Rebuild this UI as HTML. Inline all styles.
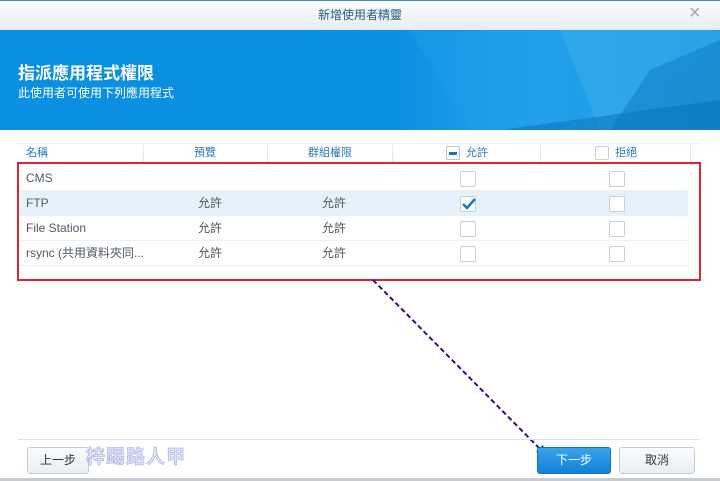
<!DOCTYPE html><html><head><meta charset="utf-8"><style>
body{margin:0;width:720px;height:481px;overflow:hidden;background:#fff;font-family:"Liberation Sans","Noto Sans CJK TC",sans-serif;position:relative}
.a{position:absolute;line-height:16px;white-space:nowrap}
.t{font-size:12px;color:#505a64}
.cb{position:absolute;width:14px;height:14px;border:1px solid #c8d0d8;border-radius:2px;background:#fff}
.h{font-size:11px;color:#2a7ab8;top:145px}
.btn{position:absolute;top:447px;height:25px;border:1px solid #c4ccd6;border-radius:3px;background:linear-gradient(#fafcfe,#e8eef4);font-size:12px;color:#333;text-align:center;line-height:25px}
</style></head><body>
<div class="a" style="left:0;top:0;width:720px;height:30px;background:linear-gradient(#fafcfd,#e6eef4);border-top:1px solid #4a8ab8;box-sizing:border-box"></div>
<div class="a" style="left:0;top:7px;width:720px;text-align:center;font-size:12px;color:#2a5a80">新增使用者精靈</div>
<div class="a" style="left:689px;top:5px;font-size:20px;color:#9aa8b4">×</div>
<div class="a" style="left:0;top:30px;width:720px;height:100px;background:linear-gradient(90deg,#0b8fe0 0%,#0b8fe0 55%,#2aa6ec 75%,#1a90d8 100%);overflow:hidden">
<svg width="720" height="100" style="position:absolute;left:0;top:0"><polygon points="410,0 720,0 720,20 560,100 470,100" fill="#1d9de8" opacity=".6"/><polygon points="560,0 720,0 720,100 600,100" fill="#4ab8f0" opacity=".35"/><polygon points="650,40 720,10 720,100 610,100" fill="#0a7cc8" opacity=".5"/><polygon points="500,100 720,70 720,100" fill="#0670b8" opacity=".5"/></svg></div>
<div class="a" style="left:18px;top:63px;font-size:17px;line-height:22px;font-weight:bold;color:#fff">指派應用程式權限</div>
<div class="a" style="left:18px;top:85px;font-size:12px;color:#fff">此使用者可使用下列應用程式</div>
<div class="a" style="left:17px;top:143px;width:682px;height:19px;border-top:1px solid #eef2f5"></div>
<div class="a" style="left:143px;top:145px;width:1px;height:17px;background:#e2e8ee"></div>
<div class="a" style="left:267px;top:145px;width:1px;height:17px;background:#e2e8ee"></div>
<div class="a" style="left:392px;top:145px;width:1px;height:17px;background:#e2e8ee"></div>
<div class="a" style="left:540px;top:145px;width:1px;height:17px;background:#e2e8ee"></div>
<div class="a" style="left:690px;top:145px;width:1px;height:17px;background:#e2e8ee"></div>
<div class="a h" style="left:26px">名稱</div><div class="a h" style="left:194px">預覽</div><div class="a h" style="left:308px">群組權限</div><div class="a h" style="left:466px">允許</div><div class="a h" style="left:615px">拒絕</div>
<div class="cb" style="left:446px;top:146px;width:12px;height:12px;border-color:#b8c8d8"><div style="position:absolute;left:2px;top:5px;width:8px;height:3px;background:#1a78c0"></div></div>
<div class="cb" style="left:595px;top:146px;width:12px;height:12px"></div>
<div class="a" style="left:18px;top:191px;width:670px;height:25px;background:#e6f2fb"></div>
<div class="a" style="left:18px;top:190px;width:670px;height:1px;background:#eef1f4"></div>
<div class="a" style="left:18px;top:240px;width:670px;height:1px;background:#eef1f4"></div>
<div class="a" style="left:18px;top:265px;width:670px;height:1px;background:#eef1f4"></div>
<div class="a t" style="left:26px;top:170px">CMS</div>
<div class="a t" style="left:26px;top:195px">FTP</div><div class="a t" style="left:198px;top:195px">允許</div><div class="a t" style="left:322px;top:195px">允許</div>
<div class="a t" style="left:26px;top:220px">File Station</div><div class="a t" style="left:198px;top:220px">允許</div><div class="a t" style="left:322px;top:220px">允許</div>
<div class="a t" style="left:26px;top:245px">rsync (共用資料夾同...</div><div class="a t" style="left:198px;top:245px">允許</div><div class="a t" style="left:322px;top:245px">允許</div>
<div class="cb" style="left:460px;top:171px"></div><div class="cb" style="left:609px;top:171px"></div>
<div class="cb" style="left:460px;top:196px"><svg width="16" height="14" style="position:absolute;left:0;top:0"><path d="M2 7 L6 11 L14 2" stroke="#1a78c0" stroke-width="2.5" fill="none"/></svg></div><div class="cb" style="left:609px;top:196px"></div>
<div class="cb" style="left:460px;top:221px"></div><div class="cb" style="left:609px;top:221px"></div>
<div class="cb" style="left:460px;top:246px"></div><div class="cb" style="left:609px;top:246px"></div>
<div class="a" style="left:17px;top:162px;width:680px;height:115px;border:2px solid #d9262c"></div>
<svg class="a" style="left:0;top:0" width="720" height="481"><path d="M373 280 L542 451" stroke="#1a1a8a" stroke-width="2" stroke-dasharray="5,3" fill="none"/><polygon points="546,455 536,452 543,445" fill="#1a1a8a"/></svg>
<div class="a" style="left:18px;top:439px;width:682px;height:1px;background:#dde3e8"></div>
<div class="btn" style="left:27px;width:60px">上一步</div>
<div class="a" style="left:86px;top:447px;font-size:19px;line-height:22px;font-weight:bold;color:#dde2f8;letter-spacing:1px;-webkit-text-stroke:0.5px #9aa4e0">梓踢路人甲</div>
<div class="btn" style="left:537px;width:72px;background:linear-gradient(#3aa4ec,#1282d8);border-color:#0e74c4;color:#fff">下一步</div>
<div class="btn" style="left:619px;width:74px">取消</div>
<div class="a" style="left:0;top:478px;width:720px;height:3px;background:#c8ccd0"></div>
</body></html>
